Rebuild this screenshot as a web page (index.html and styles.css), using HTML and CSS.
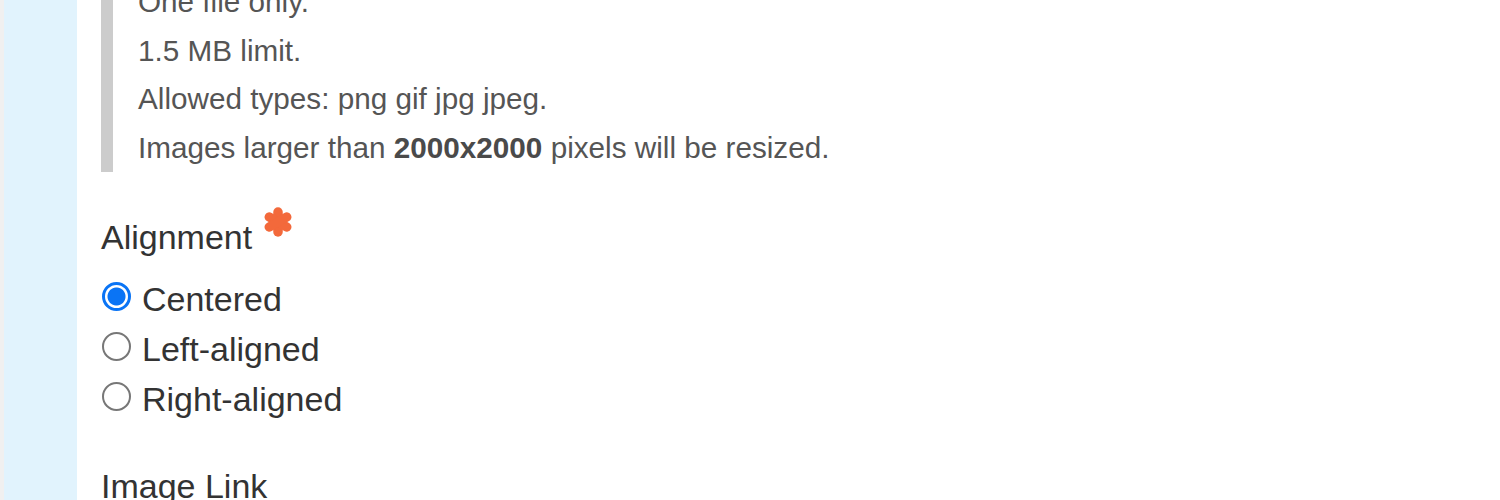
FILE: index.html
```html
<!DOCTYPE html>
<html lang="en">
<head>
<meta charset="utf-8">
<title>Image upload settings</title>
<link rel="stylesheet" href="styles.css">
</head>
<body>
<div class="page">
  <aside class="sidebar"></aside>
  <main class="content">
    <div class="description">
      <p>One file only.</p>
      <p>1.5 MB limit.</p>
      <p>Allowed types: png gif jpg jpeg.</p>
      <p>Images larger than <strong>2000x2000</strong> pixels will be resized.</p>
    </div>
    <div class="radios" role="radiogroup" aria-label="Alignment">
      <div class="field-label">
        <span>Alignment</span>
        <svg class="required" viewBox="0 0 30 30" width="30" height="30" aria-hidden="true">
          <g stroke="#f3693b" stroke-width="9.5" stroke-linecap="round">
            <line x1="15" y1="5" x2="15" y2="25"/>
            <line x1="6.3" y1="10" x2="23.7" y2="20"/>
            <line x1="6.3" y1="20" x2="23.7" y2="10"/>
          </g>
        </svg>
      </div>
      <label class="radio"><input type="radio" name="align" checked><span>Centered</span></label>
      <label class="radio"><input type="radio" name="align"><span>Left-aligned</span></label>
      <label class="radio"><input type="radio" name="align"><span>Right-aligned</span></label>
    </div>
    <div class="field">
      <div class="field-label"><span>Image Link</span></div>
    </div>
  </main>
</div>
</body>
</html>
```
FILE: styles.css
```css
html, body {
  margin: 0;
  padding: 0;
  background: #ffffff;
  overflow: hidden;
}

body {
  font-family: "Liberation Sans", Arial, sans-serif;
  height: 500px;
}

.page {
  display: flex;
  height: 500px;
}

.sidebar {
  flex: 0 0 73px;
  border-left: 4px solid #f0f0f0;
  background: #e1f3fd;
}

.content {
  flex: 1;
  padding-left: 24px;
}

.description {
  margin-top: -22px;
  border-left: 12px solid #cccccc;
  padding-left: 25px;
  color: #555555;
  font-size: 29.7px;
  line-height: 48.5px;
}

.description p {
  margin: 0;
}

.description strong {
  font-weight: 700;
  color: #4a4a4a;
}

.radios {
  margin-top: 45px;
}

.field-label {
  display: flex;
  align-items: flex-start;
  gap: 11px;
  font-size: 34px;
  line-height: 40px;
  color: #333333;
}

.required {
  margin-top: -10px;
  flex: 0 0 auto;
}

.radio {
  display: flex;
  align-items: center;
  gap: 11px;
  font-size: 34px;
  line-height: 50px;
  color: #333333;
}

.radios .field-label {
  margin-bottom: 17px;
}

.radio input {
  appearance: none;
  -webkit-appearance: none;
  margin: 0 0 5px 1px;
  width: 29px;
  height: 29px;
  border: 2px solid #777777;
  border-radius: 50%;
  background: #ffffff;
  box-sizing: border-box;
  flex: 0 0 auto;
}

.radio input:checked {
  border: 3px solid #0a74f5;
  background: radial-gradient(circle, #0a74f5 0 8.5px, #ffffff 9.5px);
}

.field {
  margin-top: 42px;
}
```
